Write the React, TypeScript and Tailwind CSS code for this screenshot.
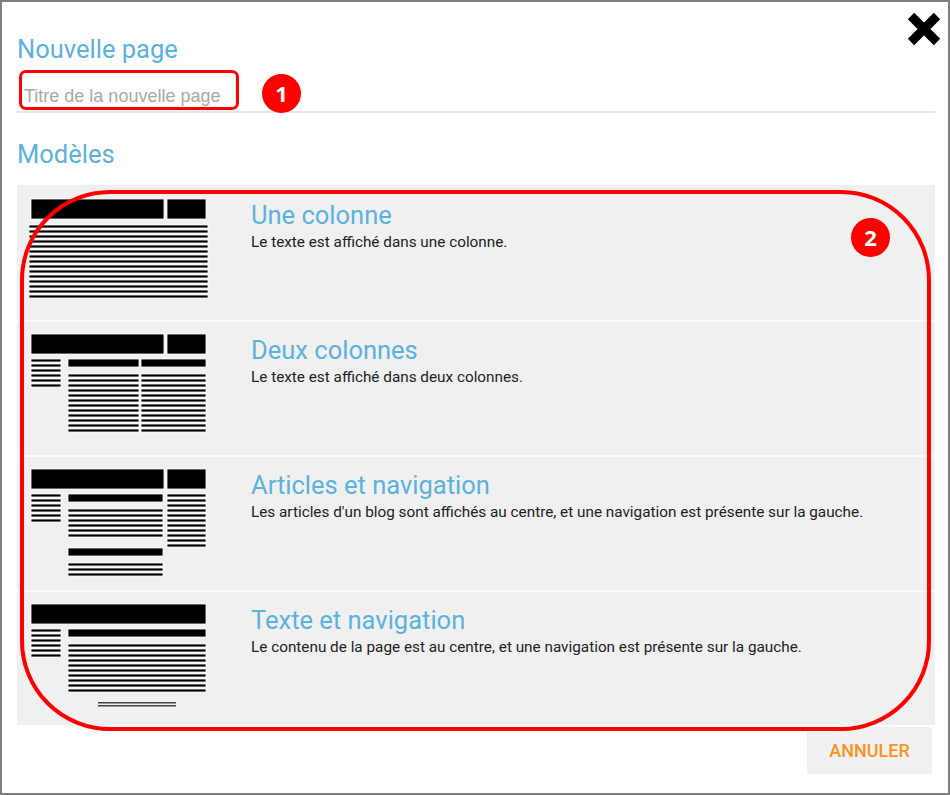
import React from "react";

type Bar = [number, number, number, number];

// repeated text lines in a thumbnail: x, y, width, count
const lines = (x: number, y: number, w: number, n: number, h = 3): Bar[] =>
  Array.from({ length: n }, (_, i) => [x, y + i * 5, w, h] as Bar);

const layouts: { title: string; text: string; bars: Bar[]; footer?: boolean }[] = [
  {
    title: "Une colonne",
    text: "Le texte est affiché dans une colonne.",
    bars: [[2, 1, 133, 20], [138, 1, 39, 20], ...lines(0, 27, 179, 15)],
  },
  {
    title: "Deux colonnes",
    text: "Le texte est affiché dans deux colonnes.",
    bars: [
      [2, 1, 133, 20],
      [138, 1, 39, 20],
      ...lines(2, 26, 30, 6),
      [39, 26, 71, 8],
      [112, 26, 65, 8],
      ...lines(39, 41, 71, 12),
      ...lines(112, 41, 65, 12),
    ],
  },
  {
    title: "Articles et navigation",
    text: "Les articles d'un blog sont affichés au centre, et une navigation est présente sur la gauche.",
    bars: [
      [2, 1, 133, 20],
      [138, 1, 39, 20],
      ...lines(2, 26, 30, 6),
      [39, 26, 95, 8],
      ...lines(39, 41, 95, 6),
      [39, 80, 95, 8],
      ...lines(39, 95, 95, 3),
      ...lines(138, 26, 39, 11),
    ],
  },
  {
    title: "Texte et navigation",
    text: "Le contenu de la page est au centre, et une navigation est présente sur la gauche.",
    bars: [
      [2, 1, 175, 20],
      ...lines(2, 26, 30, 6),
      [39, 26, 138, 8],
      ...lines(39, 41, 138, 10),
    ],
    footer: true,
  },
];

function Thumb({ bars, footer }: { bars: Bar[]; footer?: boolean }) {
  return (
    <svg width="180" height="110" viewBox="0 0 180 110" className="shrink-0">
      {bars.map(([x, y, w, h], i) => (
        <rect key={i} x={x} y={y} width={w} height={h} fill="#000" stroke="#fff" strokeWidth="0.8" />
      ))}
      {footer && (
        <g fill="#444">
          <rect x="69" y="99" width="78" height="1.5" />
          <rect x="69" y="102" width="78" height="1.5" />
        </g>
      )}
    </svg>
  );
}

function Badge({ n, className }: { n: number; className: string }) {
  return (
    <div
      className={`absolute w-[39px] h-[39px] rounded-full bg-[#ff0000] text-white flex items-center justify-center text-[22px] font-bold font-['Open_Sans',sans-serif] ${className}`}
    >
      {n}
    </div>
  );
}

export default function App() {
  return (
    <div className="relative w-[950px] h-[795px] border-2 border-[#7f7f7f] bg-white pl-[15px] pr-[13px] pt-[33px] font-['Roboto',sans-serif] overflow-hidden">
      {/* Close */}
      <button className="absolute top-[10px] right-[7px] w-[34px] h-[34px]" aria-label="Fermer">
        <svg width="34" height="34" viewBox="0 0 34 34">
          <path d="M4 4 L30 30 M30 4 L4 30" stroke="#000" strokeWidth="9" />
        </svg>
      </button>

      <h1 className="text-[25.5px] leading-[28px] text-[#5bb2db]">Nouvelle page</h1>
      <input
        placeholder="Titre de la nouvelle page"
        className="mt-[11px] block w-full h-[39px] pt-[12px] pb-[5px] pl-[7px] border-b-2 border-[#e6e6e6] text-[18px] leading-[20px] font-['Liberation_Sans',sans-serif] placeholder:text-[#a9a9a9] outline-none"
      />

      <h2 className="mt-[27px] text-[25.5px] leading-[28px] text-[#5bb2db]">Modèles</h2>

      {/* Templates */}
      <div className="mt-[17px] bg-[#f0f0f0]">
        {layouts.map((l, i) => (
          <div
            key={l.title}
            className={`flex h-[135px] pl-[12px] pt-[13px] ${i > 0 ? "shadow-[inset_0_2px_0_#fafafa]" : ""}`}
          >
            <Thumb bars={l.bars} footer={l.footer} />
            <div className="ml-[42px] pt-[3px]">
              <div className="text-[25.5px] leading-[28px] text-[#5bb2db]">{l.title}</div>
              <div className="mt-[3px] text-[15.3px] leading-[20px] text-[#222]">{l.text}</div>
            </div>
          </div>
        ))}
      </div>

      <div className="flex justify-end pr-[3px] mt-[2px]">
        <button className="w-[125px] h-[47px] rounded-[2px] bg-[#f0f0f0] text-[#f7931e] text-[18px] font-medium">
          ANNULER
        </button>
      </div>

      {/* Annotations */}
      <div className="absolute left-[17px] top-[68px] w-[220px] h-[40px] border-[3px] border-[#ff0000] rounded-[7px] pointer-events-none" />
      <Badge n={1} className="left-[260px] top-[72px]" />
      <div className="absolute left-[18px] top-[188px] w-[911px] h-[541px] border-4 border-[#ff0000] rounded-[90px] pointer-events-none" />
      <Badge n={2} className="left-[849px] top-[216px]" />
    </div>
  );
}
